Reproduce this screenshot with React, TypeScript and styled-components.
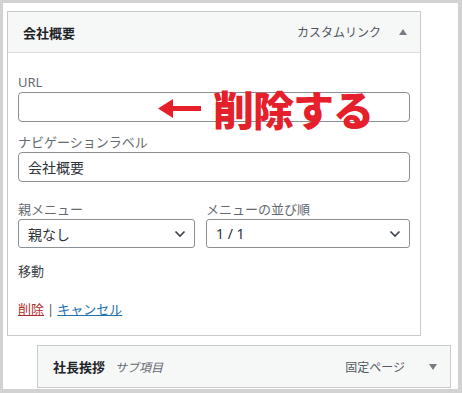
import React from "react";
import styled, { createGlobalStyle } from "styled-components";

const GlobalStyle = createGlobalStyle`
  html, body {
    margin: 0;
    padding: 0;
    background: #ffffff;
  }
  body {
    font-family: "Noto Sans", "Noto Sans CJK JP", sans-serif;
    color: #2c3338;
  }
`;

const Frame = styled.div`
  box-sizing: border-box;
  width: 462px;
  height: 393px;
  border-style: solid;
  border-color: #d2d2d2;
  border-width: 3px 4px 4px 3px;
  background: #ffffff;
  padding: 8px 0 0 4px;
  overflow: hidden;
`;

const Panel = styled.div<{ $indent?: number }>`
  box-sizing: border-box;
  width: 414px;
  margin-left: ${(p) => p.$indent || 0}px;
  border: 1px solid #c9cacc;
  background: #ffffff;
`;

const Header = styled.div<{ $h: number }>`
  display: flex;
  align-items: center;
  height: ${(p) => p.$h}px;
  padding: 0 13px 0 15px;
  background: #f6f7f7;
`;

const Title = styled.span`
  font-size: 13px;
  font-weight: 700;
  color: #1d2327;
`;

const SubTitle = styled.span`
  margin-left: 10px;
  font-size: 12px;
  font-style: italic;
  color: #646970;
`;

const ItemType = styled.span`
  margin-left: auto;
  font-size: 12px;
  color: #50575e;
`;

const Toggle = styled.span<{ $gap: number }>`
  display: inline-flex;
  margin-left: ${(p) => p.$gap}px;
  color: #787c82;
`;

const Body = styled.div`
  position: relative;
  border-top: 1px solid #dcdcde;
  padding: 19px 10px 16px;
`;

const Field = styled.div<{ $top?: number }>`
  margin-top: ${(p) => p.$top || 0}px;
`;

const Label = styled.label`
  display: block;
  font-size: 13px;
  line-height: 20px;
  color: #646970;
`;

const TextInput = styled.div`
  box-sizing: border-box;
  height: 30px;
  display: flex;
  align-items: center;
  padding: 0 9px;
  border: 1px solid #8c8f94;
  border-radius: 4px;
  font-size: 14px;
  color: #2c3338;
`;

const SelectRow = styled.div`
  display: grid;
  grid-template-columns: 177px 1fr;
  column-gap: 11px;
  margin-top: 18px;
`;

const SelectLabel = styled(Label)`
  line-height: 19px;
`;

const Select = styled.div`
  box-sizing: border-box;
  height: 29px;
  display: flex;
  align-items: center;
  justify-content: space-between;
  padding: 0 8px 0 9px;
  border: 1px solid #8c8f94;
  border-radius: 3px;
  font-size: 14px;
  color: #2c3338;
`;

const Plain = styled.div<{ $top: number }>`
  margin-top: ${(p) => p.$top}px;
  font-size: 13px;
  line-height: 20px;
  color: #3c434a;
`;

const Actions = styled.div`
  margin-top: 18px;
  font-size: 13px;
  line-height: 20px;
  color: #50575e;
`;

const Link = styled.a<{ $danger?: boolean }>`
  color: ${(p) => (p.$danger ? "#b32d2e" : "#2271b1")};
  text-decoration: underline;
  cursor: pointer;
`;

const Sep = styled.span`
  margin: 0 3px;
`;

const Note = styled.div`
  position: absolute;
  left: 150px;
  top: 32px;
  display: flex;
  align-items: center;
  gap: 12px;
  color: #e5202a;
  font-family: "Noto Sans CJK JP", sans-serif;
  font-weight: 900;
  font-size: 41px;
  line-height: 46px;
  letter-spacing: -1px;
  pointer-events: none;
`;

const Gap = styled.div`
  height: 9px;
`;

const Chevron = () => (
  <svg width="12" height="8" viewBox="0 0 12 8">
    <path d="M1.5 1.5 L6 6 L10.5 1.5" fill="none" stroke="#3c434a" strokeWidth="1.6" />
  </svg>
);

const Arrow = () => (
  <svg width="43" height="19" viewBox="0 0 43 19">
    <path d="M0 9.5 L15 0 L15 7 L43 7 L43 12 L15 12 L15 19 Z" fill="#e5202a" />
  </svg>
);

const App: React.FC = () => {
  return (
    <>
      <GlobalStyle />
      <Frame>
        <Panel>
          <Header $h={40}>
            <Title>会社概要</Title>
            <ItemType>カスタムリンク</ItemType>
            <Toggle $gap={18}>
              <svg width="8" height="6" viewBox="0 0 8 6">
                <path d="M0 6 L4 0 L8 6 Z" fill="#787c82" />
              </svg>
            </Toggle>
          </Header>
          <Body>
            <Field>
              <Label>URL</Label>
              <TextInput />
            </Field>
            <Field $top={10}>
              <Label>ナビゲーションラベル</Label>
              <TextInput>会社概要</TextInput>
            </Field>
            <SelectRow>
              <div>
                <SelectLabel>親メニュー</SelectLabel>
                <Select>
                  親なし
                  <Chevron />
                </Select>
              </div>
              <div>
                <SelectLabel>メニューの並び順</SelectLabel>
                <Select>
                  1 / 1
                  <Chevron />
                </Select>
              </div>
            </SelectRow>
            <Plain $top={13}>移動</Plain>
            <Actions>
              <Link $danger>削除</Link>
              <Sep>|</Sep>
              <Link>キャンセル</Link>
            </Actions>
            <Note>
              <Arrow />
              <span>削除する</span>
            </Note>
          </Body>
        </Panel>
        <Gap />
        <Panel $indent={30}>
          <Header $h={41}>
            <Title>社長挨拶</Title>
            <SubTitle>サブ項目</SubTitle>
            <ItemType>固定ページ</ItemType>
            <Toggle $gap={24}>
              <svg width="8" height="6" viewBox="0 0 8 6">
                <path d="M0 0 L8 0 L4 6 Z" fill="#787c82" />
              </svg>
            </Toggle>
          </Header>
        </Panel>
      </Frame>
    </>
  );
};

export default App;
